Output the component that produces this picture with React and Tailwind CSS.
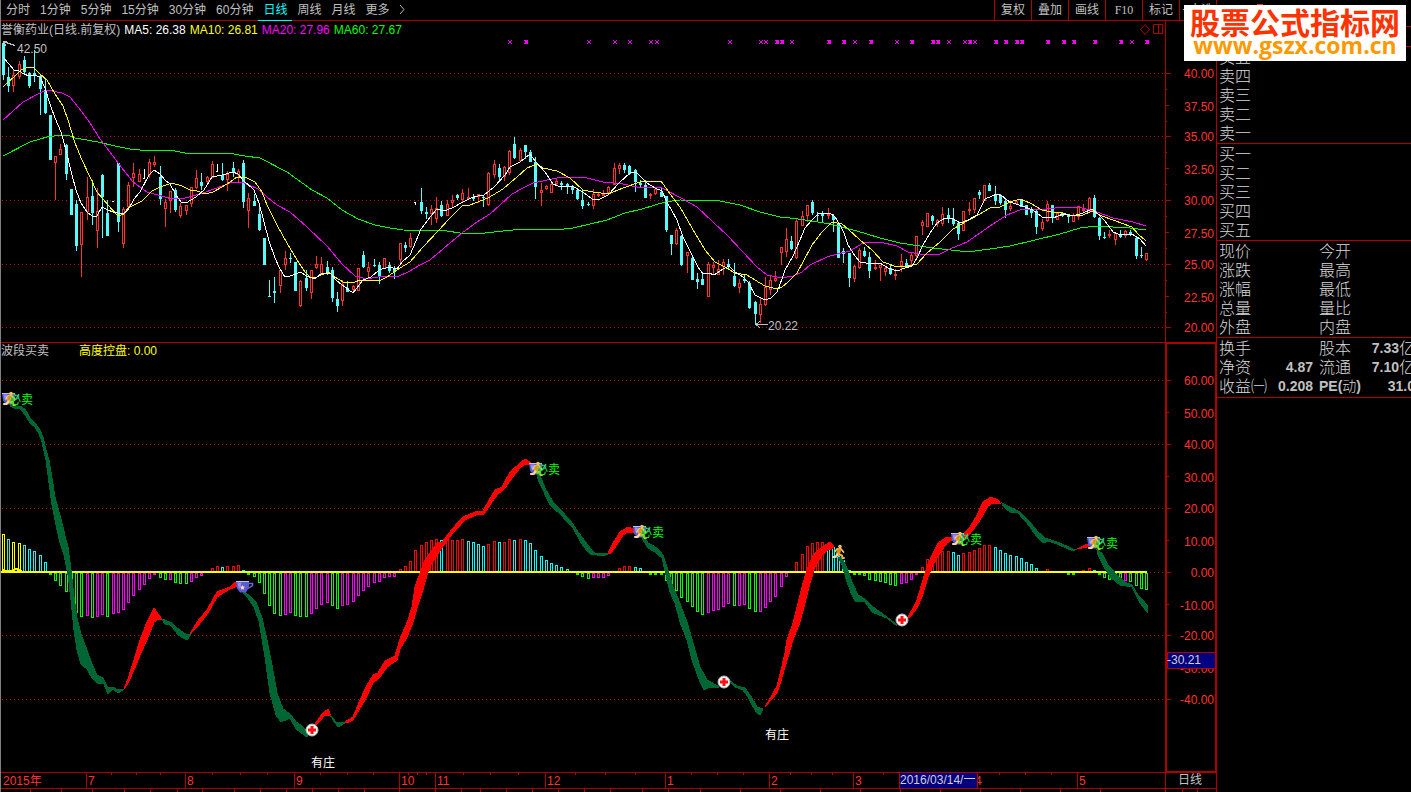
import { useState } from "react";

const PERIODS = [
  "分时",
  "1分钟",
  "5分钟",
  "15分钟",
  "30分钟",
  "60分钟",
  "日线",
  "周线",
  "月线",
  "更多",
];

const TOOLS = ["复权", "叠加", "画线", "F10", "标记", "+自选"];

const AVERAGES = [
  { label: "MA5: 26.38", className: "text-white" },
  { label: "MA10: 26.81", className: "text-[#ffff00]" },
  { label: "MA20: 27.96", className: "text-[#ff00ff]" },
  { label: "MA60: 27.67", className: "text-[#00ff00]" },
];

const STEP = 5.2192;
const barX = (i) => Math.round(3 + STEP * i);

// One candle per trading day: high, low, body top, body bottom, kind
// (c = down day, r = up day, w = unchanged). Values are chart coordinates.
const CANDLES = `
41 80 43 75 c|67 92 77 86 c|70 92 75 86 r|61 79 64 77 r|56 75 60 72 c|72 88 73 86 c|50 82 73 76 c|75 115 76 89 c|79 114 90 113 c|115 160 115 160 c
156 200 156 163 r|144 155 149 155 r|144 180 145 174 c|189 215 189 215 c|200 251 204 246 c|212 277 212 245 r|177 220 197 212 r|180 225 196 213 c|188 248 211 231 r|174 238 175 197 c
200 236 213 236 c|201 202 201 202 w|163 232 163 222 c|207 248 209 244 r|182 208 185 207 r|163 187 173 178 r|169 182 174 182 r|169 179 178 179 w|159 178 162 175 r|156 167 162 165 r
166 205 177 199 c|199 227 202 209 r|191 213 191 201 r|188 212 190 210 c|203 218 206 216 r|205 215 205 211 r|187 207 187 204 r|170 189 178 188 r|173 190 182 186 c|176 184 177 182 r
161 178 164 178 r|164 172 171 172 w|163 181 175 180 c|171 191 174 180 r|162 177 168 173 c|169 183 171 175 r|160 208 163 202 c|193 228 198 211 r|194 206 201 206 c|205 231 214 230 c
238 265 238 265 c|280 297 296 297 c|277 303 291 293 c|270 293 270 286 r|251 270 258 265 r|253 263 258 259 c|262 291 262 291 c|280 307 281 306 r|270 291 278 288 c|270 299 270 293 r
256 269 264 268 r|257 275 264 274 r|261 275 267 272 c|267 302 270 298 c|292 312 299 306 c|280 306 284 301 r|281 292 288 292 c|285 291 286 290 r|268 291 268 291 r|251 268 255 267 c
262 278 267 272 r|259 267 265 266 c|262 284 265 276 c|258 269 258 269 r|262 273 265 271 c|266 279 269 272 c|243 264 243 260 r|242 252 245 248 c|233 248 238 247 r|202 205 202 203 w
188 214 202 211 c|207 219 212 214 c|205 225 209 214 r|197 223 208 219 r|201 217 205 216 c|200 216 204 216 r|195 208 200 203 r|194 200 195 198 c|189 202 193 200 r|188 198 197 198 r
194 201 197 199 c|194 203 194 197 r|196 207 197 198 c|172 206 173 205 r|160 178 164 175 r|164 182 168 177 c|166 181 167 177 r|150 175 151 173 r|137 159 144 158 c|148 162 150 161 r
145 159 145 152 c|150 162 152 162 c|157 199 162 187 c|183 206 190 193 r|185 190 186 189 r|182 193 184 193 r|178 186 181 184 r|181 190 183 185 c|183 194 184 186 c|185 194 186 190 c
188 200 190 199 c|189 209 200 206 c|202 206 204 205 c|189 209 194 206 r|193 197 194 196 r|190 196 194 195 r|186 195 187 193 r|163 185 168 185 r|163 174 165 169 r|163 173 165 170 c
165 175 166 174 c|169 192 170 182 c|180 188 183 185 c|180 198 185 198 c|193 199 194 195 r|188 195 189 194 r|188 197 192 197 c|196 232 196 230 c|235 255 235 244 c|228 245 230 244 r
235 266 236 265 c|252 273 252 256 r|257 280 258 280 c|273 289 279 282 c|273 285 279 285 c|262 297 264 297 r|262 275 265 268 r|260 275 269 275 r|259 275 262 267 r|259 269 264 266 c
263 287 276 286 c|279 293 283 288 r|274 283 279 281 c|281 309 283 308 c|301 325 302 314 c|298 323 304 315 r|277 306 287 305 r|276 295 280 290 r|271 282 278 281 r|247 265 247 253 r
228 257 239 252 r|236 250 241 249 c|219 259 221 258 r|211 226 216 226 r|205 222 205 216 r|200 215 202 213 c|212 221 215 216 c|211 222 214 216 c|208 219 214 216 r|214 232 216 220 c
223 258 223 258 c|248 263 251 254 c|253 287 253 278 c|265 282 266 279 r|248 269 250 268 r|247 257 251 256 c|252 278 257 271 c|260 270 267 269 r|265 281 265 268 r|267 276 268 272 r
265 275 268 274 c|269 280 274 276 r|254 272 261 266 r|259 266 263 266 c|252 266 255 261 r|236 259 236 256 r|220 235 222 226 r|213 227 213 227 r|215 225 216 221 c|219 227 220 224 r
207 226 214 224 r|208 223 215 219 c|208 226 219 224 c|223 240 223 234 c|211 231 211 231 r|202 215 209 210 r|198 213 198 210 r|190 199 192 195 c|185 201 185 201 r|183 191 185 191 c
186 205 194 201 c|194 205 195 203 c|199 218 201 210 c|203 211 206 209 r|200 205 201 204 r|199 207 199 207 c|205 215 205 215 c|207 218 209 213 c|210 234 211 227 c|219 231 222 229 r
201 222 204 221 r|205 223 205 218 c|213 220 213 220 r|212 217 213 216 c|214 223 215 217 c|213 222 215 222 r|206 220 206 217 r|204 212 209 210 r|197 212 198 210 r|195 218 198 217 c
217 240 218 236 c|232 239 237 238 c|230 238 234 236 r|233 245 233 240 r|230 238 234 237 c|230 238 231 236 r|230 236 232 234 c|237 259 238 256 c|247 258 255 256 c|253 261 253 260 r
`
  .trim()
  .split(/[|\n]/)
  .map((row) => {
    const [high, low, top, bottom, kind] = row.trim().split(" ");
    return { high: +high, low: +low, top: +top, bottom: +bottom, kind };
  });

// Histogram ends, one per day, "-" where there is no bar.
const BARS = `
y534 c539 y542 y543 c545 c549 c551 c555 c562 g574 g581 g586 g592 g600 g613 g617 m616 g618 m617 m615
g617 m614 m613 m610 m603 m596 m590 m585 m579 m575 g578 g580 m580 g583 g584 g584 m582 m578 m576 -
r568 r566 c567 r566 r566 r565 c570 g574 g577 g583 g594 g606 g614 g616 m615 m613 g616 g617 g617 m614
m609 m605 m603 g606 g609 m606 m605 m602 m596 m591 m587 m583 m582 m578 m577 m577 r569 r566 r561 r550
r545 r542 r540 r539 c540 r540 r540 r540 r539 c541 c542 c544 c546 r544 r541 c542 r542 r539 c540 r539
c540 c543 c550 c556 c560 c563 c565 c567 c569 - g574 g577 g579 m578 m578 m578 m576 - r568 r566
r566 c567 c568 - g574 g574 g575 g581 g584 g591 g598 g602 g607 g612 g615 m613 m611 m610 m607 m604
g606 m606 m605 g609 g612 m612 m608 m602 m597 m587 m577 - r562 r554 r546 r543 r542 r542 c543 c547
c556 c560 c570 g574 g575 g576 g580 g581 g582 g583 g585 g586 m584 m583 m580 m574 r567 r559 r556 r552
r551 r551 c552 c555 r553 r552 r550 r548 r545 r545 c547 c550 c553 c555 c556 c558 c562 c564 c568 -
r569 - - - g574 g574 - r570 r568 c570 g574 g578 g580 g581 g582 m581 g582 g586 g589 g590
`
  .trim()
  .split(/\s+/);

const BAR_COLORS = {
  y: "#ffff00",
  c: "#00ffff",
  r: "#ff0000",
  g: "#00ff00",
  m: "#ff00ff",
};

const MA_LINES = [
  {
    color: "#00ff00",
    points:
      "3,156 30,142 47,137 62,135 70,136 75,138 98,142 115,146 130,149 150,151 155,150 175,151 185,153 228,153 245,156 260,158 287,172 312,190 327,198 342,210 358,219 375,225 390,228 403,230 447,231 460,233 485,233 503,231 523,229 555,230 573,228 607,220 625,213 642,209 665,202 680,200 720,201 740,205 760,212 780,217 790,218 805,220 830,224 857,231 880,238 900,243 933,248 960,251 975,251 990,249 1010,246 1035,240 1060,234 1080,228 1097,226 1113,227 1130,228 1146,230",
  },
  {
    color: "#ff00ff",
    points:
      "3,120 23,102 40,93 47,90 62,93 70,97 82,112 90,123 100,139 107,148 118,163 133,182 147,192 158,195 172,199 185,198 203,193 217,188 230,183 242,182 258,189 267,197 277,205 290,212 307,227 327,246 342,264 355,276 367,279 383,276 397,277 410,271 420,265 430,260 437,254 450,243 462,233 477,222 490,214 500,205 512,194 523,188 533,183 557,178 583,177 603,182 623,184 637,187 662,188 683,199 697,207 713,222 727,235 743,252 757,267 767,275 782,278 793,276 802,272 810,265 827,257 837,254 850,251 863,243 880,242 897,246 908,252 920,254 938,255 950,249 967,242 980,233 993,224 1007,215 1020,210 1047,209 1063,207 1082,208 1097,212 1113,218 1133,222 1146,226",
  },
  {
    color: "#ffff00",
    points:
      "3,87 8,82 14,77 21,70 28,67 34,68 40,74 47,80 55,94 63,106 68,120 75,143 82,160 90,177 97,192 108,205 118,216 124,214 128,208 142,201 152,191 160,187 172,183 182,186 190,190 197,191 205,194 213,192 222,187 230,182 237,177 247,178 255,182 262,192 267,205 277,225 287,243 297,260 305,272 310,277 317,277 328,272 335,277 343,282 355,282 360,280 379,281 387,277 400,268 410,262 423,247 438,231 450,218 462,206 470,205 488,198 503,189 517,177 527,168 537,164 543,168 557,171 570,178 583,190 593,192 608,194 623,188 640,182 661,181 668,191 680,207 692,228 705,250 715,262 723,266 735,273 747,275 755,280 765,286 777,289 782,287 788,282 797,273 803,262 812,245 822,232 832,222 842,224 848,229 860,240 872,250 883,262 897,267 908,266 917,264 927,253 940,242 953,229 967,221 980,214 990,208 1000,207 1010,202 1020,199 1030,203 1042,210 1052,212 1063,213 1073,216 1083,215 1092,211 1102,216 1113,220 1132,227 1138,234 1146,241",
  },
  {
    color: "#ffffff",
    points:
      "3,57 14,70 19,71 24,74 29,76 34,75 40,77 45,88 50,104 55,118 61,132 66,150 71,171 76,190 81,203 87,212 92,216 97,216 102,207 108,210 113,212 123,214 128,210 134,199 140,192 149,175 154,170 160,174 165,180 170,184 176,195 181,202 186,203 196,197 204,190 212,177 222,175 233,172 238,174 243,180 254,190 259,203 264,222 269,241 275,258 280,269 285,277 290,276 301,272 306,276 315,279 322,273 330,273 337,281 345,287 353,293 363,280 371,277 379,270 389,267 397,269 402,262 410,255 416,241 421,229 431,216 437,209 444,211 452,208 463,202 471,198 478,196 484,195 494,187 505,175 510,167 520,162 530,154 536,162 545,172 553,184 558,186 572,186 583,192 592,199 598,200 608,195 620,182 630,173 636,172 641,177 647,183 655,188 662,191 667,202 677,220 683,237 692,255 698,267 703,274 709,273 714,275 723,269 729,266 735,272 743,277 748,282 755,295 765,300 771,298 777,292 782,279 785,270 793,256 800,240 805,228 812,220 818,214 830,213 835,217 840,225 844,233 848,245 855,256 860,262 872,264 880,263 888,268 897,271 905,268 912,266 917,258 923,245 930,233 937,223 945,218 952,218 960,223 968,220 977,215 985,199 997,194 1002,196 1010,202 1022,206 1033,210 1042,217 1053,218 1063,214 1073,216 1083,213 1092,209 1098,214 1105,221 1113,232 1118,234 1132,234 1140,239 1146,246",
  },
];

const PRICE_AXIS = [
  ["40.00", 73],
  ["37.50", 105],
  ["35.00", 136],
  ["32.50", 168],
  ["30.00", 200],
  ["27.50", 232],
  ["25.00", 264],
  ["22.50", 296],
  ["20.00", 327],
];

const WAVE_AXIS = [
  ["60.00", 380],
  ["50.00", 412],
  ["40.00", 444],
  ["30.00", 476],
  ["20.00", 508],
  ["10.00", 540],
  ["0.00", 572],
  ["-10.00", 604],
  ["-20.00", 635],
  ["-30.00", 667],
  ["-40.00", 699],
];

const SMALL_MARKS = [
  510, 589, 615, 630, 651, 657, 730, 761, 766, 792, 855, 897, 949, 965, 975, 1132,
];
const BIG_MARKS = [
  526, 777, 782, 829, 844, 871, 912, 933, 938, 970, 996, 1006, 1017, 1022, 1048, 1064,
  1074, 1095, 1121, 1147,
];

const FALLING = "#006633";
const RISING = "#ff0000";

const RIBBONS = [
  [
    FALLING,
    "10,404 14,406 20,406 25,409 30,418 35,423 40,430 43,437 46,450 49,460 52,478 55,497 58,508 62,523 66,540 68,547 71,570 74,597 77,618 81,634 88,653 92,664 97,675 103,678 108,688 113,687 118,690 124,689 118,693 113,689 108,694 104,684 97,683 92,678 87,669 81,664 77,650 74,630 71,600 68,575 64,555 60,543 56,525 52,505 49,483 46,460 42,442 39,434 35,427 30,423 26,416 20,408 14,408 10,406",
  ],
  [
    RISING,
    "124,689 128,679 133,663 140,640 147,622 154,608 158,614 162,619 157,620 154,622 147,640 140,655 134,670 128,683",
  ],
  [FALLING, "162,619 172,623 177,628 187,635 191,634 187,640 178,635 170,624 165,624"],
  [
    RISING,
    "190,634 197,622 207,610 217,592 230,587 237,581 240,585 237,586 228,590 217,597 208,613 197,627",
  ],
  [
    FALLING,
    "244,591 256,602 262,618 267,640 271,660 277,693 283,709 290,714 296,722 301,725 308,732 307,737 300,732 296,729 290,718 281,722 276,715 270,693 265,657 259,621 254,607 248,598 243,593",
  ],
  [RISING, "311,730 315,724 322,714 328,709 331,716 325,715 318,723"],
  [FALLING, "330,715 337,723 345,722 345,723 338,727 333,720"],
  [
    RISING,
    "345,722 353,717 360,700 367,685 373,675 378,673 385,661 395,656 400,639 408,620 412,607 415,587 420,573 425,560 432,550 437,543 442,542 453,528 463,517 478,511 483,511 488,502 495,490 502,487 510,472 518,465 525,459 530,462 530,464 525,464 520,468 512,478 505,488 497,495 490,505 484,514 478,514 465,520 453,533 443,546 437,555 430,567 427,575 423,590 418,605 413,622 407,637 400,649 397,660 387,667 380,677 373,683 365,700 353,720 347,723",
  ],
  [
    FALLING,
    "537,473 540,475 545,488 553,502 570,520 578,532 590,548 595,553 607,553 608,554 603,556 590,554 583,546 573,528 560,514 550,505 542,488 537,477",
  ],
  [
    RISING,
    "608,553 613,543 620,532 628,527 633,529 633,532 628,532 623,535 617,545 610,554",
  ],
  [
    FALLING,
    "642,535 648,543 657,548 663,555 668,570 673,587 678,598 687,622 693,643 700,667 707,680 718,686 718,687 710,687 704,690 700,682 692,660 687,640 680,622 675,603 670,592 666,575 662,558 655,552 648,548 643,540",
  ],
  [
    FALLING,
    "730,681 737,686 745,688 752,698 757,707 763,709 760,715 756,712 748,697 743,690 735,687",
  ],
  [
    RISING,
    "765,707 772,695 777,686 781,670 785,653 787,640 793,623 798,603 803,583 808,567 813,555 822,547 830,542 833,545 833,548 828,550 822,555 815,567 810,583 805,603 800,622 793,640 785,667 780,684 777,693 770,701",
  ],
  [
    FALLING,
    "838,557 842,558 847,568 852,582 858,595 865,599 873,607 883,614 895,623 897,626 887,618 872,612 865,602 855,601 852,595 847,582 842,565",
  ],
  [
    RISING,
    "908,617 913,608 917,600 922,583 927,567 932,555 938,543 947,537 952,537 963,535 970,527 977,515 983,502 991,497 998,500 1000,503 993,503 988,506 980,520 973,530 967,537 952,540 947,543 940,553 933,565 928,577 922,597 917,608 910,617",
  ],
  [
    FALLING,
    "1002,503 1010,507 1020,512 1030,522 1038,532 1045,538 1060,543 1073,549 1077,549 1073,551 1057,544 1048,541 1043,543 1037,537 1027,523 1018,513 1010,512 1003,506",
  ],
  [RISING, "1077,549 1087,544 1090,545 1087,547"],
  [
    FALLING,
    "1097,550 1102,553 1108,565 1117,575 1125,582 1132,585 1138,595 1147,605 1147,612 1140,603 1132,587 1120,585 1110,577 1103,565 1098,555",
  ],
];

const MONTHS = [
  ["2015年", 1],
  ["7", 86],
  ["8", 185],
  ["9", 294],
  ["10", 399],
  ["11", 435],
  ["12", 545],
  ["1", 665],
  ["2", 769],
  ["3", 853],
  ["4", 973],
  ["5", 1077],
];

const WEEK_TICKS = [
  111, 136, 160, 212, 240, 267, 320, 347, 373, 408, 417, 426, 463, 490, 518, 575, 605,
  635, 691, 717, 743, 790, 811, 832, 883, 999, 1025, 1051,
];

const LOWER_TICKS = [
  30, 61, 92, 124, 150, 177, 202, 234, 260, 286, 312, 338, 364, 399, 435, 461, 480, 506,
  532, 558, 584, 610, 642, 668, 700, 740, 780, 820, 860, 900, 940, 980, 1020, 1060, 1100,
  1165, 1182, 1197,
];

const SELL_SIGNALS = [
  [2, 392],
  [529, 462],
  [633, 525],
  [951, 532],
  [1087, 536],
];

const BUY_CROSSES = [
  [312, 730],
  [724, 682],
  [902, 620],
];

const QUOTES = [
  ["现价", "今开"],
  ["涨跌", "最高"],
  ["涨幅", "最低"],
  ["总量", "量比"],
  ["外盘", "内盘"],
];

const FUNDAMENTALS = [
  ["换手", "", "股本", "7.33", "亿"],
  ["净资", "4.87", "流通", "7.10", "亿"],
  ["收益㈠", "0.208", "PE(动)", "31.0", ""],
];

function Candle({ index, candle }) {
  const x = barX(index);
  const { high, low, top, bottom, kind } = candle;

  if (kind === "w") {
    return (
      <path
        d={`M${x - 1} ${bottom - 0.5}h2M${x + 0.5} ${high}V${low}`}
        stroke="#ffffff"
        fill="none"
      />
    );
  }
  if (kind === "c") {
    return (
      <g fill="#54fcfc">
        <rect x={x} y={high} width="1" height={low - high} />
        <rect x={x - 1} y={top} width="3" height={Math.max(1, bottom - top)} />
      </g>
    );
  }
  return (
    <g stroke="#ff3232" fill="none">
      <path d={`M${x + 0.5} ${high}V${top}M${x + 0.5} ${bottom}V${low}`} />
      <rect
        x={x - 0.5}
        y={top + 0.5}
        width="2"
        height={Math.max(1, bottom - top - 1)}
        fill="#000000"
      />
    </g>
  );
}

function Bar({ index, code }) {
  if (code === "-") return null;
  const x = barX(index);
  const end = Number(code.slice(1));
  const top = end < 572 ? end : 573;
  const bottom = end < 572 ? 572 : end;
  return (
    <rect
      x={x - 0.5}
      y={top + 0.5}
      width="2"
      height={Math.max(1, bottom - top - 1)}
      fill="none"
      stroke={BAR_COLORS[code[0]]}
    />
  );
}

function GridLine({ y }) {
  return (
    <line x1="2" x2="1164" y1={y + 0.5} y2={y + 0.5} stroke="#d00000" strokeDasharray="1 3" />
  );
}

function Mark({ x, big }) {
  return (
    <g stroke="#ff00ff">
      <path d={`M${x - 2} 40l4 4M${x + 2} 40l-4 4`} />
      {big && <rect x={x - 1} y="40" width="3" height="4" fill="#ff00ff" stroke="none" />}
    </g>
  );
}

function Cup({ x, y }) {
  return (
    <g transform={`translate(${x} ${y})`}>
      <path d="M12 3.500h4.500v2L12 8.500" fill="none" stroke="#6868d8" strokeWidth="1.500" />
      <path d="M0 1h13v6l-3 5.500H4L1 8.500z" fill="#5a5ad6" />
      <path d="M1.500 2.500h4L4 9 2.500 7z" fill="#9090f4" />
      <path d="M0 1.500h13" stroke="#c0c0e8" strokeWidth="1" />
      <path d="M6.500 5l.8 1.500 1.700.3-1.200 1.200.3 1.700-1.600-.8-1.600.8.3-1.700-1.200-1.200 1.700-.3z" fill="#ffd8a0" />
    </g>
  );
}

function Runner({ x, y }) {
  return (
    <g transform={`translate(${x} ${y})`}>
      <circle cx="8" cy="1.500" r="1.800" fill="#f0c070" />
      <g fill="none" strokeLinecap="round" strokeLinejoin="round">
        <path d="M3 6.500l2-2.500h4l2.500 3" stroke="#f0c070" strokeWidth="1.800" />
        <path d="M7 5.500L6 9" stroke="#e08c18" strokeWidth="4" />
        <path d="M5.500 9.500L3.500 12H1" stroke="#f8d898" strokeWidth="2.200" />
        <path d="M7 9.500l3 1 .5 2.500H12" stroke="#e8b050" strokeWidth="2" />
      </g>
    </g>
  );
}

function SellSignal({ x, y }) {
  return (
    <g>
      <Cup x={x} y={y} />
      <Runner x={x + 1} y={y} />
      <text x={x + 7} y={y + 12} fill="#00ff00">
        必卖
      </text>
    </g>
  );
}

function BuyCross({ x, y }) {
  return (
    <g transform={`translate(${x} ${y})`}>
      <circle r="6" fill="#f4f4f4" stroke="#b8b8b8" />
      <path d="M-4 0H4M0-4V4" stroke="#ff1010" strokeWidth="3" />
    </g>
  );
}

function PriceChart() {
  return (
    <svg
      viewBox="1 21 1215 322"
      className="block w-full h-auto text-[12px]"
      role="img"
      aria-label="日线K线图"
    >
      <g shapeRendering="crispEdges">
        {PRICE_AXIS.filter((_, i) => i % 2 === 0).map(([label, y]) => (
          <GridLine key={label} y={y} />
        ))}
        {CANDLES.map((candle, i) => (
          <Candle key={i} index={i} candle={candle} />
        ))}
        {MA_LINES.map((line) => (
          <polyline key={line.color} points={line.points} fill="none" stroke={line.color} />
        ))}
        {SMALL_MARKS.map((x) => (
          <Mark key={x} x={x} />
        ))}
        {BIG_MARKS.map((x) => (
          <Mark key={x} x={x} big />
        ))}
        <path d="M1165.500 21V343M1 342.500H1216" stroke="#b00000" />
        {PRICE_AXIS.map(([label, y], i) => (
          <path
            key={label}
            d={`M1166 ${y + 0.5}h${i % 2 === 0 ? 5 : 3}M1166 ${y + 16.5}h1`}
            stroke="#b00000"
          />
        ))}
      </g>

      <path
        d="M1140.500 29.500l4.500-5 4.500 5-4.500 5zM1153.500 24.500h9v9h-9zM1158.500 24.500v9"
        fill="none"
        stroke="#b00000"
      />

      {/* highest and lowest price callouts */}
      <g stroke="#c0c0c0" fill="none" shapeRendering="crispEdges">
        <path d="M3 41.500l12 4M3 41.500h4M3 41.500l3 4" />
        <path d="M756 324.500h12M756 324.500l4-3M756 324.500l4 3" />
      </g>
      <g fill="#c0c0c0">
        <text x="17" y="53">42.50</text>
        <text x="768" y="330">20.22</text>
      </g>
      <g fill="#ff3232" textAnchor="end">
        {PRICE_AXIS.map(([label, y], i) => (
          <text key={label} x="1214" y={i % 2 === 0 ? y + 5 : y + 6}>
            {label}
          </text>
        ))}
      </g>
    </svg>
  );
}

function WaveChart() {
  return (
    <svg
      viewBox="1 343 1215 449"
      className="block w-full h-auto text-[12px]"
      role="img"
      aria-label="波段买卖指标"
    >
      <g shapeRendering="crispEdges">
        {WAVE_AXIS.filter((_, i) => i % 2 === 0).map(([label, y]) => (
          <GridLine key={label} y={y} />
        ))}
        {BARS.map((code, i) => (
          <Bar key={i} index={i} code={code} />
        ))}
        <path d="M1 572H1147" stroke="#ffff00" strokeWidth="2" />
        <path d="M2 569l4 2h6l4-2 6 2" stroke="#ffff00" strokeWidth="2" fill="none" />
        {RIBBONS.map(([color, points]) => (
          <polygon key={points} points={points} fill={color} stroke={color} strokeWidth="1" />
        ))}
      </g>

      <Cup x={236} y={580} />
      <Runner x={832} y={545} />
      {SELL_SIGNALS.map(([x, y]) => (
        <SellSignal key={x} x={x} y={y} />
      ))}
      {BUY_CROSSES.map(([x, y]) => (
        <BuyCross key={x} x={x} y={y} />
      ))}
      <g fill="#ffffff">
        <text x="311" y="767">有庄</text>
        <text x="765" y="739">有庄</text>
      </g>

      <g fill="#ff3232">
        {WAVE_AXIS.map(([label, y], i) => (
          <text key={label} x="1214" y={i % 2 === 0 ? y + 5 : y + 6} textAnchor="end">
            {label}
          </text>
        ))}
        {MONTHS.map(([label, x]) => (
          <text key={x} x={x + 2} y="785">
            {label}
          </text>
        ))}
      </g>
      <g shapeRendering="crispEdges" stroke="#b00000" fill="none">
        <path d="M1166 343V772" strokeWidth="2" />
        <path d="M1215.500 343V772M1165 343.500H1216M1165 771.500H1216" />
        <path d="M1 772.500H1216M1 788.500H1216M1165.500 772V792" />
        {WAVE_AXIS.map(([label, y], i) => (
          <path key={label} d={`M1167 ${y + 0.5}h${i % 2 === 0 ? 4 : 2}`} />
        ))}
        {MONTHS.slice(1).map(([label, x]) => (
          <path key={x} d={`M${x + 0.5} 772V788`} />
        ))}
        {WEEK_TICKS.map((x) => (
          <path key={x} d={`M${x + 0.5} 773v2`} />
        ))}
        {LOWER_TICKS.map((x) => (
          <path key={x} d={`M${x + 0.5} 789v3`} />
        ))}
      </g>
      <text x="1178" y="784" fill="#c0c0c0">
        日线
      </text>

      {/* crosshair read-outs */}
      <g stroke="#b00000" fill="#000080" shapeRendering="crispEdges">
        <rect x="1167.500" y="652.500" width="48" height="16" />
        <rect x="899.500" y="772.500" width="78" height="16" />
      </g>
      <g fill="#d0d0d0">
        <text x="1167" y="664">-30.21</text>
        <text x="900" y="784">2016/03/14/一</text>
      </g>
    </svg>
  );
}

function OrderLevels({ side }) {
  const levels = ["一", "二", "三", "四", "五"];
  const ordered = side === "卖" ? levels.reverse() : levels;
  return (
    <ul className="pt-px border-b border-[#b00000]">
      {ordered.map((level) => (
        <li key={level} className="pl-0.5">
          {side}
          {level}
        </li>
      ))}
    </ul>
  );
}

function QuotePanel() {
  return (
    <aside className="overflow-hidden whitespace-nowrap text-[16px] leading-[19px] text-[#d8d8d8] font-light">
      <div className="flex h-[27px] border-b border-[#b00000] pl-10 pt-1">
        <span className="h-4 w-1.5 bg-[#ff3232]" />
      </div>
      <div className="h-5 border-b border-[#b00000]" />
      <OrderLevels side="卖" />
      <OrderLevels side="买" />
      <div className="pt-px border-b border-[#b00000]">
        {QUOTES.map(([left, right]) => (
          <div key={left} className="flex pl-0.5">
            <span className="w-[100px] shrink-0">{left}</span>
            <span>{right}</span>
          </div>
        ))}
      </div>
      <div className="py-px border-b border-[#b00000]">
        {FUNDAMENTALS.map(([left, leftValue, right, rightValue, unit]) => (
          <div key={left} className="flex h-[19px] pl-0.5">
            <span className="flex w-[100px] shrink-0 justify-between pr-1.5">
              <span>{left}</span>
              <b className="text-[14px] font-bold text-[#c0c0c0]">{leftValue}</b>
            </span>
            {right.startsWith("PE") ? (
              <span className="w-[52px] shrink-0 text-[14px]">
                <b className="font-bold text-[#c0c0c0]">PE(</b>动
                <b className="font-bold text-[#c0c0c0]">)</b>
              </span>
            ) : (
              <span className="w-[52px] shrink-0">{right}</span>
            )}
            <span className="flex w-11 shrink-0 justify-end">
              <b className="text-[14px] font-bold text-[#c0c0c0]">{rightValue}</b>
              <span>{unit}</span>
            </span>
          </div>
        ))}
      </div>
    </aside>
  );
}

export default function App() {
  const [period, setPeriod] = useState("日线");

  return (
    <div className="relative min-h-screen overflow-hidden bg-black font-['Liberation_Sans','Noto_Sans_CJK_SC',sans-serif] text-[12px] text-[#c0c0c0] grid grid-cols-[minmax(0,1fr)_194px]">
      <main className="border-l border-l-[#808080] border-r border-r-[#b00000]">
        <nav className="flex h-[21px] justify-between border-b border-[#b00000] whitespace-nowrap">
          <div className="flex">
            {PERIODS.map((name) => (
              <button
                key={name}
                type="button"
                onClick={() => setPeriod(name)}
                className={`h-[21px] px-[5px] leading-5 border-b ${
                  name === period
                    ? "border-[#00ffff] text-[#00ffff]"
                    : "border-transparent"
                }`}
              >
                {name}
              </button>
            ))}
            <svg viewBox="0 0 6 20" className="ml-1 h-5 w-1.5" aria-hidden="true">
              <path d="M1 5l4 4.500-4 4.500" fill="none" stroke="#c0c0c0" />
            </svg>
          </div>
          <div className="flex">
            {TOOLS.map((name) => (
              <button
                key={name}
                type="button"
                className={`h-5 w-[37px] border-l border-[#b00000] leading-[18px] ${
                  name === "F10" ? "font-['Liberation_Serif',serif]" : ""
                }`}
              >
                {name}
              </button>
            ))}
          </div>
        </nav>

        <section className="relative">
          <h1 className="absolute left-0 top-0 flex gap-1 whitespace-nowrap leading-[18px]">
            <span>誉衡药业(日线.前复权)</span>
            {AVERAGES.map((average) => (
              <span key={average.label} className={average.className}>
                {average.label}
              </span>
            ))}
          </h1>
          <PriceChart />
        </section>

        <section className="relative">
          <h2 className="absolute left-0 top-0 flex gap-[30px] whitespace-nowrap leading-4">
            <span>波段买卖</span>
            <span className="text-[#ffff00]">高度控盘: 0.00</span>
          </h2>
          <WaveChart />
        </section>
      </main>

      <QuotePanel />

      <a
        href="#home"
        className="absolute right-[5px] top-[5px] h-14 w-[222px] overflow-hidden bg-white text-center font-bold"
      >
        <span className="block font-['Noto_Sans_CJK_SC',sans-serif] text-[30px] leading-8 text-[#ff3300]">
          股票公式指标网
        </span>
        <span className="block font-['Open_Sans',sans-serif] text-[23px] leading-4 text-[#ff9900]">
          www.gszx.com.cn
        </span>
      </a>
    </div>
  );
}
